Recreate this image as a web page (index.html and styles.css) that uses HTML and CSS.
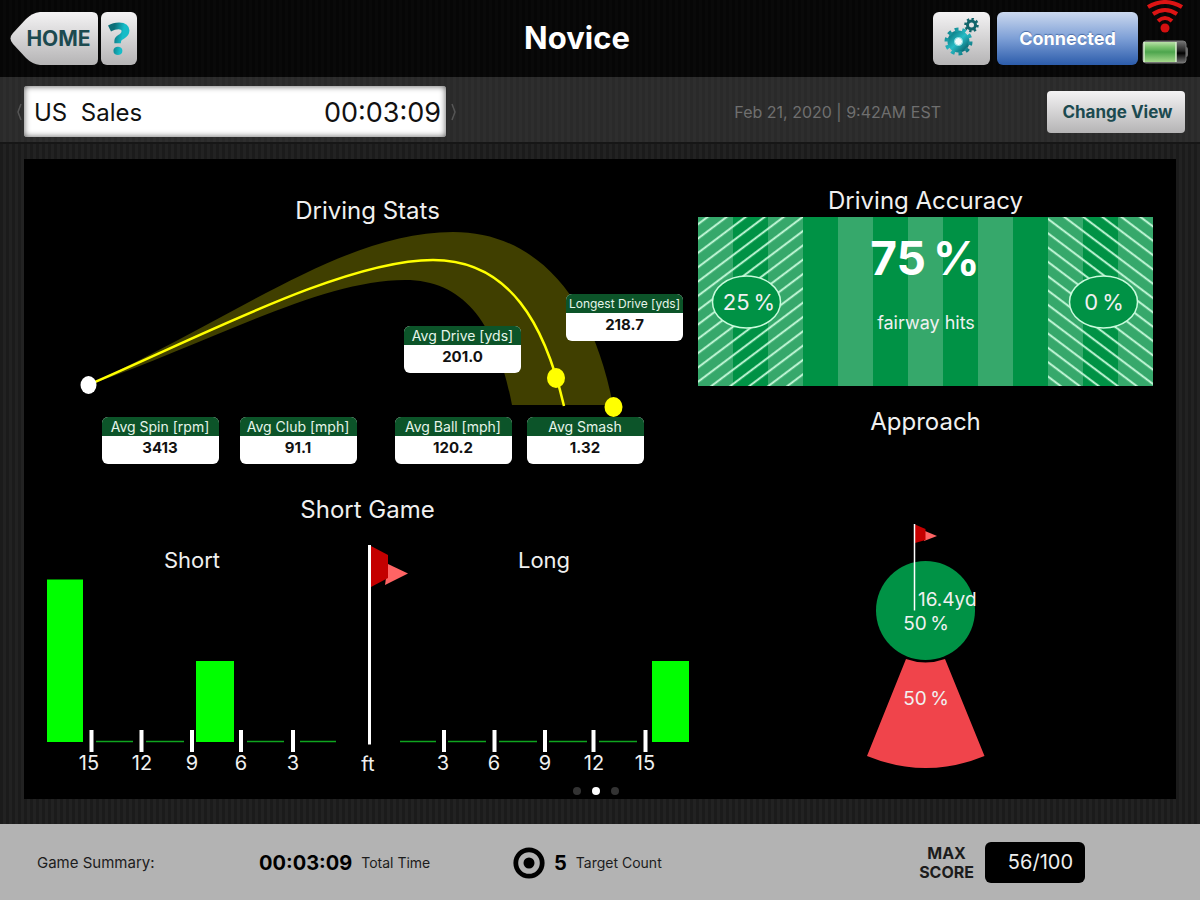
FILE: index.html
```html
<!DOCTYPE html>
<html lang="en">
<head>
<meta charset="utf-8">
<meta name="viewport" content="width=device-width, initial-scale=1">
<title>Novice</title>
<link rel="stylesheet" href="styles.css">
</head>
<body>
<header class="topbar">
  <div class="topbar-group">
    <button class="home-button" type="button">
      <svg class="home-shape" viewBox="0 0 88 53" preserveAspectRatio="none" aria-hidden="true">
        <defs>
          <linearGradient id="silver" x1="0" y1="0" x2="0" y2="1">
            <stop offset="0" stop-color="#f4f3f4"/><stop offset="1" stop-color="#b5b4b5"/>
          </linearGradient>
        </defs>
        <path d="M30 0H82Q88 0 88 6V47Q88 53 82 53H30Q22 52 16 46L3 32Q-2 26.500 3 21L16 7Q22 1 30 0Z" fill="url(#silver)"/>
      </svg>
      <span class="home-label">HOME</span>
    </button>
    <button class="metal help-button" type="button"><span class="help-mark">?</span></button>
  </div>
  <h1 class="title">Novice</h1>
  <div class="topbar-group topbar-right">
    <button class="metal settings-button" type="button" aria-label="Settings">
      <svg width="38" height="42" viewBox="0 0 38 42" aria-hidden="true">
        <defs>
          <linearGradient id="teal" x1="0" y1="0" x2="1" y2="1">
            <stop offset="0" stop-color="#0e8088"/><stop offset=".5" stop-color="#27bcc6"/><stop offset="1" stop-color="#0a6a74"/>
          </linearGradient>
        </defs>
        <g fill="none" stroke="url(#teal)">
          <circle cx="15.500" cy="23.500" r="7.500" stroke-width="7"/>
          <circle cx="15.500" cy="23.500" r="12" stroke-width="4" pathLength="20" stroke-dasharray="1 1"/>
          <circle cx="28.500" cy="7" r="4" stroke-width="3" stroke="#11656b"/>
          <circle cx="28.500" cy="7" r="6" stroke-width="2.500" pathLength="16" stroke-dasharray="1 1" stroke="#11656b"/>
        </g>
        <circle cx="15.500" cy="23.500" r="4" fill="#eefafa" stroke="#7adbe0"/>
      </svg>
    </button>
    <button class="connected-button" type="button">Connected</button>
    <div class="status">
      <svg width="40" height="34" viewBox="0 0 40 34" role="img" aria-label="Wireless signal">
        <g fill="none" stroke="#dc1414" stroke-width="4">
          <path d="M3 7Q20 -3 37 7"/>
          <path d="M8 14Q20 6 32 14"/>
          <path d="M13 21Q20 15 27 21"/>
        </g>
        <circle cx="20" cy="28" r="4.500" fill="#d41010"/>
      </svg>
      <svg width="46" height="24" viewBox="0 0 46 24" role="img" aria-label="Battery level">
        <defs>
          <linearGradient id="charge" x1="0" y1="0" x2="0" y2="1">
            <stop offset="0" stop-color="#b9e0a8"/><stop offset=".25" stop-color="#7cc46f"/><stop offset=".5" stop-color="#4da54d"/><stop offset="1" stop-color="#a5d98c"/>
          </linearGradient>
          <linearGradient id="casing" x1="0" y1="0" x2="0" y2="1">
            <stop offset="0" stop-color="#777"/><stop offset=".45" stop-color="#222"/><stop offset=".55" stop-color="#000"/><stop offset="1" stop-color="#777"/>
          </linearGradient>
        </defs>
        <rect x="42" y="7" width="4" height="10" rx="2" fill="#666"/>
        <rect x="1" y="1" width="43" height="22" rx="3" fill="url(#casing)" stroke="#777"/>
        <rect x="2" y="2" width="32" height="20" fill="url(#charge)"/>
        <path d="M2 2V22M34 2V22" stroke="#d8f0cd" stroke-width="1.500"/>
      </svg>
    </div>
  </div>
</header>

<div class="subbar">
  <button class="chevron" type="button" aria-label="Previous player">
    <svg width="7" height="18" viewBox="0 0 7 18"><path d="M5 1L2 9L5 17" fill="none" stroke="#555" stroke-width="1.500"/></svg>
  </button>
  <div class="player"><span class="player-name">US&nbsp; Sales</span><span>00:03:09</span></div>
  <button class="chevron" type="button" aria-label="Next player">
    <svg width="7" height="18" viewBox="0 0 7 18"><path d="M2 1L5 9L2 17" fill="none" stroke="#555" stroke-width="1.500"/></svg>
  </button>
  <time class="date" datetime="2020-02-21T09:42">Feb 21, 2020 | 9:42AM EST</time>
  <button class="metal view-button" type="button">Change View</button>
</div>

<main class="stage">
  <div class="panel">
    <div class="columns">
      <div class="column">
        <section>
          <h2 class="heading">Driving Stats</h2>
          <div class="flight">
            <svg class="chart" viewBox="24 226 674 191" role="img" aria-label="Ball flight">
              <path d="M88 385C240 315 345 232 453 232C535 232 592 295 613 405H512C497 325 465 280 405 280C320 280 210 343 88 385Z" fill="#403f00"/>
              <path d="M88 385C200 337 345 260 433 260C510 260 545 325 564 406" fill="none" stroke="#ff0" stroke-width="2.500"/>
              <ellipse cx="88.500" cy="385" rx="8" ry="9" fill="#fff"/>
              <ellipse cx="556" cy="378" rx="9" ry="10" fill="#ff0"/>
              <ellipse cx="613.500" cy="407" rx="9" ry="10" fill="#ff0"/>
            </svg>
            <dl class="stat stat-average"><dt>Avg Drive [yds]</dt><dd>201.0</dd></dl>
            <dl class="stat stat-longest"><dt>Longest Drive [yds]</dt><dd>218.7</dd></dl>
          </div>
          <div class="stats">
            <div class="stats-pair stats-wide">
              <dl class="stat"><dt>Avg Spin [rpm]</dt><dd>3413</dd></dl>
              <dl class="stat"><dt>Avg Club [mph]</dt><dd>91.1</dd></dl>
            </div>
            <div class="stats-pair">
              <dl class="stat"><dt>Avg Ball [mph]</dt><dd>120.2</dd></dl>
              <dl class="stat"><dt>Avg Smash</dt><dd>1.32</dd></dl>
            </div>
          </div>
        </section>
        <section class="short-game">
          <h2 class="heading">Short Game</h2>
          <svg class="chart" viewBox="24 525 674 255" role="img" aria-label="Short game distances">
            <g class="mid light" font-size="22">
              <text x="192" y="568">Short</text>
              <text x="544" y="568">Long</text>
            </g>
            <path d="M47 579.500H83V742H47ZM196 661H234V742H196ZM652 661H689V742H652Z" fill="#0f0"/>
            <path d="M96 741.500H133M146 741.500H184M247 741.500H284M300 741.500H336M400 741.500H436M448 741.500H486M499 741.500H537M549 741.500H587M599 741.500H637" stroke="#0fa51f" stroke-width="1.500"/>
            <path d="M91.500 730V752M141.500 730V752M192 730V752M241 730V752M293 730V752M444 730V752M494.500 730V752M545 730V752M593.500 730V752M645.500 730V752" stroke="#fff" stroke-width="4"/>
            <path d="M388 564L408 573.500L385 585Z" fill="#ff6464"/>
            <path d="M371 546L388 555V578L371 587Z" fill="#c40000"/>
            <path d="M369.500 545V744.500" stroke="#fff" stroke-width="3"/>
            <g class="mid light" font-size="20">
              <text x="89" y="770">15</text>
              <text x="142" y="770">12</text>
              <text x="192" y="770">9</text>
              <text x="241" y="770">6</text>
              <text x="293" y="770">3</text>
              <text x="368" y="771">ft</text>
              <text x="443" y="770">3</text>
              <text x="494" y="770">6</text>
              <text x="545" y="770">9</text>
              <text x="594" y="770">12</text>
              <text x="645" y="770">15</text>
            </g>
          </svg>
        </section>
      </div>
      <div class="column column-right">
        <section>
          <h2 class="heading">Driving Accuracy</h2>
          <svg class="chart accuracy" viewBox="698 217 455 169" role="img" aria-label="Driving accuracy">
            <defs>
              <pattern id="mow" width="70" height="169" x="698" y="217" patternUnits="userSpaceOnUse">
                <rect width="70" height="169" fill="#009245"/><rect width="35" height="169" fill="#36a86b"/>
              </pattern>
              <pattern id="rise" width="20" height="11.440" patternUnits="userSpaceOnUse" patternTransform="translate(698 218) rotate(-37)">
                <path d="M-1 5H21" stroke="#c9fbdc" stroke-width="1.900"/>
              </pattern>
              <pattern id="fall" width="20" height="11.440" patternUnits="userSpaceOnUse" patternTransform="translate(1047 212) rotate(37)">
                <path d="M-1 5H21" stroke="#c9fbdc" stroke-width="1.900"/>
              </pattern>
            </defs>
            <rect x="698" y="217" width="455" height="169" fill="url(#mow)"/>
            <rect x="698" y="217" width="105" height="169" fill="url(#rise)"/>
            <rect x="1048" y="217" width="105" height="169" fill="url(#fall)"/>
            <g fill="#009245" stroke="#c9fbdc" stroke-width="1.500">
              <ellipse cx="746.500" cy="302" rx="34" ry="26"/>
              <ellipse cx="1103.500" cy="302" rx="34" ry="26"/>
            </g>
            <g class="mid light" font-size="22">
              <text x="749" y="310">25&#8201;%</text>
              <text x="1104" y="310">0&#8201;%</text>
            </g>
            <text class="mid" x="925" y="275" font-size="46" font-weight="700" fill="#fff">75&#8201;%</text>
            <text class="mid light" x="926" y="329" font-size="18">fairway hits</text>
          </svg>
        </section>
        <section class="approach">
          <h2 class="heading">Approach</h2>
          <svg class="chart" viewBox="698 437 455 338" role="img" aria-label="Approach">
            <circle cx="925.500" cy="610.500" r="49.500" fill="#009245"/>
            <path d="M906 659Q925.500 666 945 659L984.500 756Q926 780 867 756Z" fill="#f0444b"/>
            <path d="M925 531L937 536L924 541Z" fill="#ff6464"/>
            <path d="M915 524.500L925.500 529V540L915 543Z" fill="#c40000"/>
            <path d="M914.500 524V610.500" stroke="#fff" stroke-width="1.500"/>
            <g class="light" font-size="19">
              <text x="918" y="606">16.4yd</text>
              <text class="mid" x="926" y="630">50&#8201;%</text>
              <text class="mid" x="926" y="705">50&#8201;%</text>
            </g>
          </svg>
        </section>
      </div>
    </div>
    <nav class="dots" aria-label="Pages">
      <button class="dot" type="button" aria-label="Page 1"></button>
      <button class="dot dot-current" type="button" aria-label="Page 2" aria-current="page"></button>
      <button class="dot" type="button" aria-label="Page 3"></button>
    </nav>
  </div>
</main>

<footer class="summary">
  <div class="summary-title">Game Summary:</div>
  <div class="summary-item"><strong class="figure">00:03:09</strong><span>Total Time</span></div>
  <div class="summary-end">
    <div class="summary-item">
      <svg width="32" height="32" viewBox="0 0 32 32" aria-hidden="true"><circle cx="16" cy="16" r="13.200" fill="none" stroke="#000" stroke-width="4.800"/><circle cx="16" cy="16" r="5.500"/></svg>
      <strong class="figure">5</strong><span>Target Count</span>
    </div>
    <div class="score">
      <div class="score-label">MAX<br>SCORE</div>
      <output class="score-value">56/100</output>
    </div>
  </div>
</footer>
</body>
</html>
```

FILE: styles.css
```css
* { box-sizing: border-box; }

body {
  margin: 0;
  min-height: 100vh;
  display: flex;
  flex-direction: column;
  background: #1d1d1d;
  font-family: Inter, "Liberation Sans", sans-serif;
  color: #f0f0f0;
}

button {
  border: 0;
  padding: 0;
  font: inherit;
  background: none;
  cursor: pointer;
}

svg { display: block; }

.topbar {
  display: grid;
  grid-template-columns: 1fr auto 1fr;
  align-items: center;
  height: 77px;
  padding: 0 12px 0 10px;
  background: repeating-linear-gradient(90deg, #060606 0 3px, #090909 3px 6px);
}

.topbar-group {
  display: flex;
  align-items: center;
  gap: 3px;
}

.topbar-right {
  justify-content: flex-end;
  gap: 7px;
}

.title {
  margin: 0;
  padding: 0 44px 2px 0;
  font-size: 31px;
  font-weight: 700;
  line-height: 36px;
  color: #fff;
}

.metal {
  border-radius: 6px;
  background: linear-gradient(#f4f3f4, #b5b4b5);
  color: #1c4a50;
  font-weight: 700;
}

.home-button {
  display: grid;
  align-items: center;
  width: 88px;
  height: 53px;
}

.home-shape,
.home-label { grid-area: 1 / 1; }

.home-shape {
  width: 88px;
  height: 53px;
}

.home-label {
  z-index: 1;
  padding-left: 9px;
  font-size: 21px;
  font-weight: 700;
  color: #1c4a50;
}

.help-button {
  width: 36px;
  height: 53px;
}

.help-mark {
  font-family: "Open Sans", Inter, sans-serif;
  font-size: 44px;
  font-weight: 800;
  line-height: 53px;
  background: linear-gradient(100deg, #0d6f78 30%, #16bcc8 60%);
  background-clip: text;
  -webkit-background-clip: text;
  color: transparent;
}

.settings-button {
  display: grid;
  place-items: center;
  width: 57px;
  height: 53px;
}

.connected-button {
  width: 141px;
  height: 53px;
  border-radius: 6px;
  background: linear-gradient(#ccd9ef, #7d9fd6 50%, #2c5cab);
  color: #fff;
  font-size: 18px;
  font-weight: 700;
  text-shadow: 0 -1px 1px #4a6da8;
}

.status {
  display: flex;
  flex-direction: column;
  align-items: center;
  gap: 6px;
  height: 77px;
  margin-left: -3px;
}

.subbar {
  display: flex;
  align-items: center;
  height: 67px;
  padding: 4px 15px 0;
  background: repeating-linear-gradient(90deg, #2a2a2a 0 3px, #2e2e2e 3px 6px);
  border-bottom: 2px solid #161616;
}

.chevron {
  width: 9px;
  padding: 0 1px;
}

.player {
  display: flex;
  flex: 0 1 422px;
  justify-content: space-between;
  align-items: center;
  height: 51px;
  margin-right: 3px;
  padding: 2px 5px 0 10px;
  border-radius: 3px;
  background: #fff;
  box-shadow: inset 0 0 6px #555;
  color: #111;
  font-size: 27px;
}

.player-name { font-size: 24px; }

.date {
  margin: 0 106px 0 auto;
  font-size: 16px;
  color: #6f6f6f;
}

.view-button {
  width: 138px;
  height: 42px;
  padding-left: 3px;
  border-radius: 4px;
  font-size: 17px;
}

.stage {
  flex: 1;
  padding: 15px 24px 25px;
  background: repeating-linear-gradient(90deg, #1b1b1b 0 3px, #222 3px 6px);
}

.panel {
  padding-bottom: 4px;
  background: #000;
}

.columns {
  display: grid;
  grid-template-columns: 674fr 478fr;
}

.column { padding-top: 37px; }

.column-right { padding: 27px 23px 0 0; }

.heading {
  margin: 0;
  font-size: 24px;
  font-weight: 400;
  line-height: 30px;
  text-align: center;
}

.column:first-child .heading { padding-left: 13px; }

.chart {
  width: 100%;
  height: auto;
}

.accuracy { margin-top: 1px; }

.mid { text-anchor: middle; }

.light { fill: #f0f0f0; }

.flight { position: relative; }

.stats {
  display: flex;
  justify-content: center;
  gap: 38px;
  padding-left: 23px;
}

.stats-pair {
  display: flex;
  gap: 15px;
}

.stats-wide { gap: 21px; }

.stat {
  width: 117px;
  margin: 0;
  border-radius: 6px;
  overflow: hidden;
  background: #fff;
  text-align: center;
  white-space: nowrap;
}

.stat dt {
  background: #0c5429;
  color: #e6f5ea;
  font-size: 14px;
  line-height: 19px;
}

.stat dd {
  margin: 0;
  padding-bottom: 5px;
  color: #111;
  font-size: 15px;
  font-weight: 700;
  line-height: 23px;
}

.stat-average,
.stat-longest { position: absolute; }

.stat-average {
  top: 100px;
  right: 177px;
}

.stat-longest {
  top: 68px;
  right: 15px;
}

.stat-longest dt { font-size: 12px; }

.short-game { padding-top: 31px; }

.approach { padding-top: 21px; }

.dots {
  display: flex;
  justify-content: center;
  gap: 11px;
  padding: 7px 8px 0 0;
}

.dot {
  width: 8px;
  height: 8px;
  border-radius: 50%;
  background: #333;
}

.dot-current { background: #fff; }

.summary {
  display: grid;
  grid-template-columns: 222fr 254fr 572fr;
  align-items: center;
  height: 76px;
  padding: 1px 115px 0 37px;
  background: #b3b3b3;
  color: #1c1c1c;
  font-size: 14px;
}

.summary-title { font-size: 15px; }

.summary-item {
  display: flex;
  align-items: center;
  gap: 9px;
}

.summary-end {
  display: flex;
  justify-content: space-between;
  align-items: center;
}

.figure {
  color: #000;
  font-size: 20px;
}

.score {
  display: flex;
  align-items: center;
  gap: 11px;
}

.score-label {
  font-size: 16px;
  font-weight: 700;
  line-height: 19px;
  text-align: center;
}

.score-value {
  width: 100px;
  padding: 0 12px;
  border-radius: 6px;
  background: #000;
  color: #eee;
  font-size: 20px;
  line-height: 41px;
  text-align: right;
}
```
